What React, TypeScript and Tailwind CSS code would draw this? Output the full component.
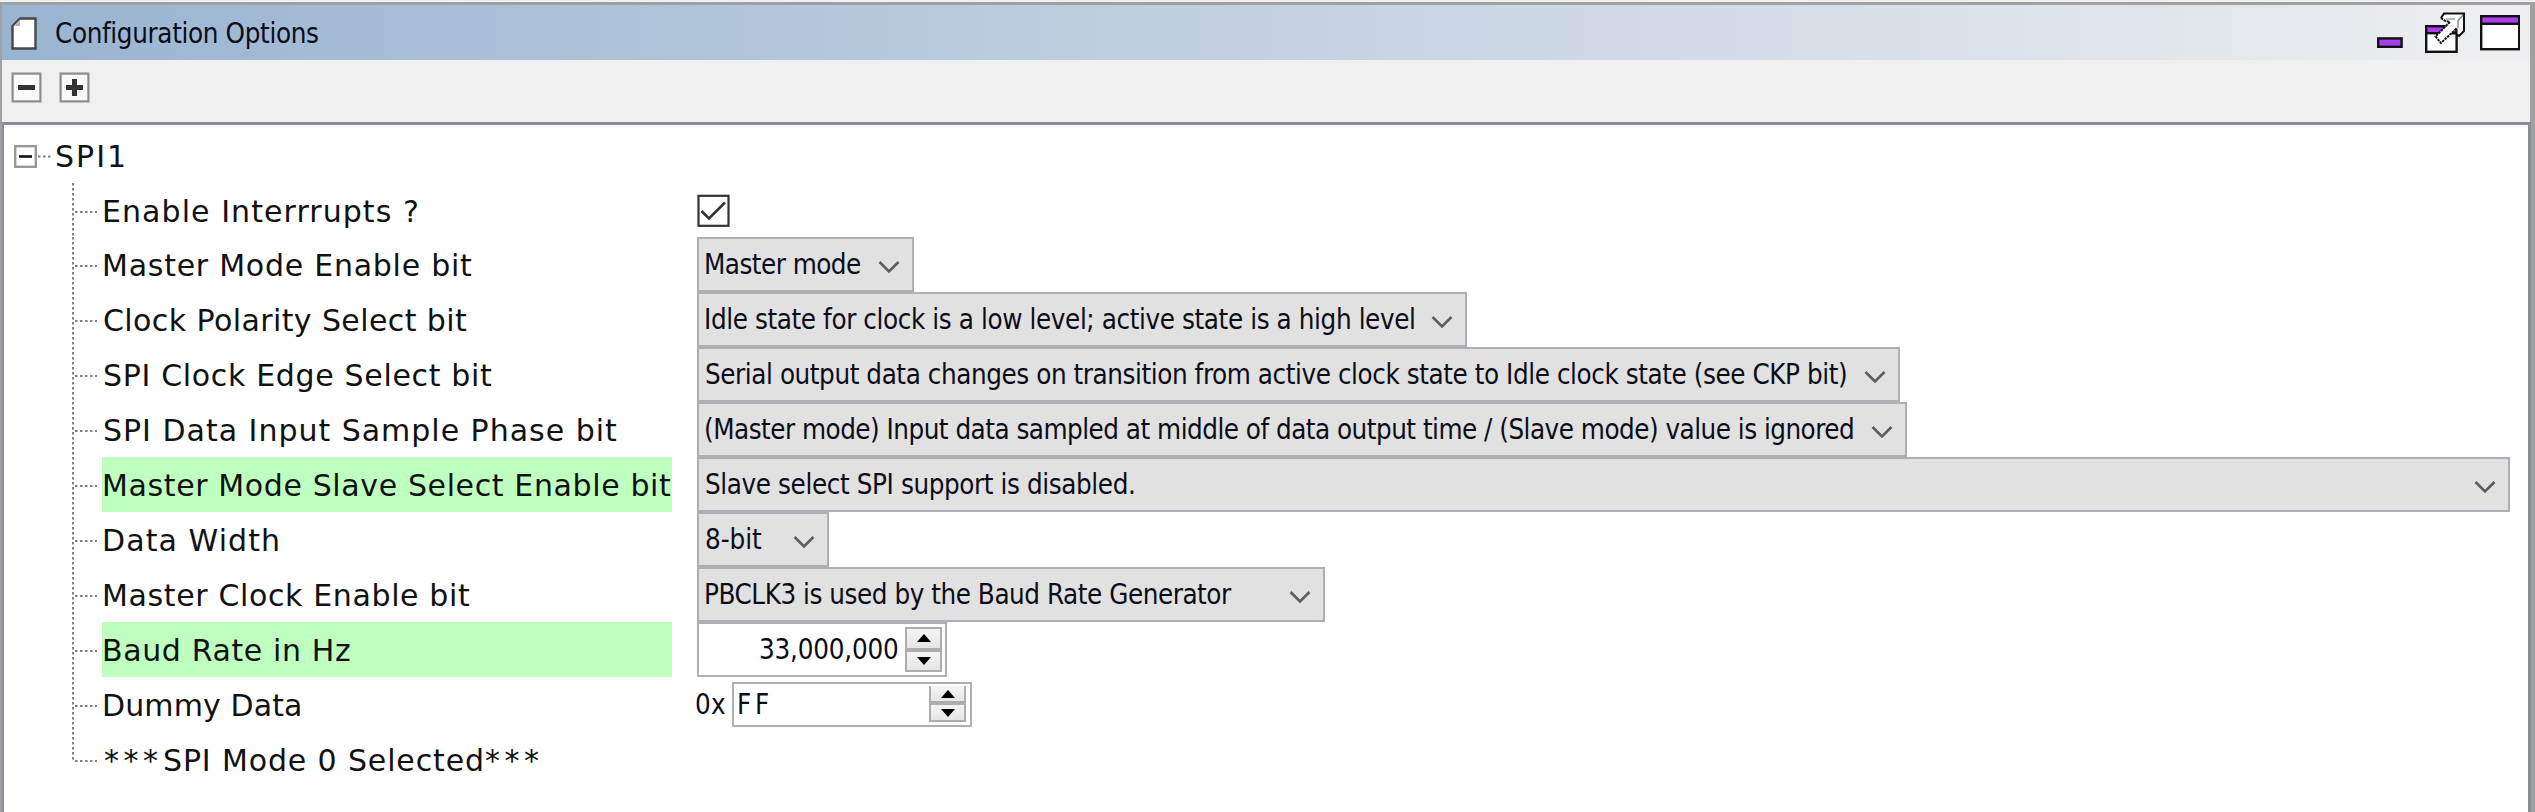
import { useLayoutEffect, useRef, type ReactNode } from "react";

const LABEL_FONT = "'DejaVu Sans', Verdana, sans-serif";
const CONTROL_FONT = "'DejaVu Sans Condensed', 'DejaVu Sans', Tahoma, sans-serif";

type FitProps = { text: string; width: number; variant?: "label" | "control" };

/** Text whose tracking is adjusted so that its glyphs span exactly `width` pixels. */
function Fit({ text, width, variant = "control" }: FitProps) {
  const ref = useRef<HTMLSpanElement>(null);
  useLayoutEffect(() => {
    const el = ref.current;
    const ctx = document.createElement("canvas").getContext("2d");
    if (!el || !ctx) return;
    ctx.font = variant === "label" ? `30px ${LABEL_FONT}` : `27.5px ${CONTROL_FONT}`;
    if (variant === "control") ctx.fontStretch = "semi-condensed";
    const m = ctx.measureText(text);
    const ink = m.actualBoundingBoxLeft + m.actualBoundingBoxRight;
    el.style.letterSpacing = `${(width - ink) / Math.max(1, text.length - 1)}px`;
    el.style.marginLeft = `${m.actualBoundingBoxLeft}px`;
  }, [text, width, variant]);
  return (
    <span
      ref={ref}
      className={
        variant === "label"
          ? "block whitespace-pre font-['DejaVu_Sans',Verdana,sans-serif] text-[30px] leading-[58px] text-[#111]"
          : "block whitespace-pre font-['DejaVu_Sans_Condensed','DejaVu_Sans',Tahoma,sans-serif] text-[27.5px] text-[#0c0c18] [font-stretch:semi-condensed]"
      }
    >
      {text}
    </span>
  );
}

function Chevron() {
  return (
    <svg width="22" height="14" viewBox="0 0 22 14" className="mt-[4px] shrink-0" fill="none">
      <path d="M1.5 2 L11 11.5 L20.5 2" stroke="#5c5c5c" strokeWidth="2.6" />
    </svg>
  );
}

function Combo({ text, ink, box }: { text: string; ink: number; box: string }) {
  return (
    <div className={`flex h-[55px] items-center justify-between border-2 border-[#adafb5] bg-[#e1e1e1] pl-[7px] pr-[12px] ${box}`}>
      <Fit text={text} width={ink} />
      <Chevron />
    </div>
  );
}

function Arrow({ up }: { up?: boolean }) {
  return (
    <svg width="14" height="8" viewBox="0 0 14 8">
      <path d={up ? "M7 0 L14 8 H0 Z" : "M0 0 H14 L7 8 Z"} fill="#000" />
    </svg>
  );
}

const buttonFill = "flex flex-1 items-center justify-center bg-linear-to-b from-[#f4f4f4] to-[#e6e6e6]";

type RowProps = { label: ReactNode; ink?: number; highlight?: boolean; last?: boolean; children?: ReactNode };

function Row({ label, ink = 0, highlight, last, children }: RowProps) {
  return (
    <div className="flex h-[54.95px] items-start">
      <svg width="98" height="55" viewBox="0 0 98 55" className="shrink-0" fill="none" stroke="#808080" strokeWidth="2">
        <path d={last ? "M69 0 V28" : "M69 0 V55"} strokeDasharray="2.5 2.5" />
        <path d="M71 29 H93" strokeDasharray="2.5 2.5" />
      </svg>
      <div className={highlight ? "h-[55px] w-[570px] bg-[#bfffbf] pl-[2px]" : "h-[55px] w-[570px] pl-[2px]"}>
        {typeof label === "string" ? <Fit text={label} width={ink} variant="label" /> : label}
      </div>
      <div className="ml-[25px] flex h-[55px] items-start">{children}</div>
    </div>
  );
}

export default function App() {
  return (
    <div className="flex h-[812px] w-[2535px] flex-col overflow-hidden bg-[#f0f0f0] pt-[2px]">
      <div className="flex min-h-0 flex-1 flex-col border-t-[3px] border-r-[5px] border-l-2 border-[#a0a0a0]">
        <header className="flex h-[55px] shrink-0 items-center bg-linear-to-r from-[#99b4d1] to-[#eeeff0] pl-[9px]">
          <svg width="26" height="34" viewBox="0 0 26 34" className="mt-[3px]">
            <path d="M9 1.5 H24.5 V31.5 H1.5 V9 Z" fill="#fff" stroke="#484848" strokeWidth="2.4" />
            <path d="M9 2.5 V9 H2.5 Z" fill="#b5b5b5" />
          </svg>
          <div className="ml-[19px] flex h-full flex-1 items-center pt-[2px]">
            <Fit text="Configuration Options" width={262} />
          </div>
          <svg width="144" height="55" viewBox="0 0 144 55" className="mr-[10px]" stroke="#111" strokeWidth="2.4">
            <rect x="2.2" y="33.4" width="23.4" height="8.4" fill="#a93cec" />
            <rect x="50.2" y="21.2" width="30.4" height="25.6" fill="#fff" />
            <rect x="50.2" y="21.2" width="30.4" height="7" fill="#a93cec" />
            <path d="M68 8.5 H88 V26 L83 31 L80.5 29 V23.5 L65 38 L59.5 31.5 L74 17 L69.5 16 L65 13 Z" fill="#fff" stroke="none" />
            <path d="M65 13 L68 8.5 H88 V26 L83 31 L80.5 29 V23.5" fill="none" strokeWidth="2" />
            <path d="M80.5 23.5 L65 38 L59.5 31.5 L74 17 L69.5 16 L65 13" fill="none" strokeWidth="1.9" strokeDasharray="2.6 0.8" />
            <path d="M70 14 H79 M87 10 L82 15.5 V23" fill="none" stroke="#777" strokeWidth="1.2" />
            <rect x="105.2" y="11.2" width="38" height="33" fill="#fff" />
            <rect x="105.2" y="11.2" width="38" height="7.6" fill="#a93cec" />
          </svg>
        </header>

        <div className="flex h-[62px] shrink-0 gap-[17px] pt-[12px] pl-[9px]">
          {[false, true].map((plus) => (
            <svg key={String(plus)} width="31" height="31" viewBox="0 0 31 31">
              <rect x="1.6" y="1.6" width="27.8" height="27.8" fill="#fafafa" stroke="#8c8c8c" strokeWidth="2.2" />
              <path d={plus ? "M7 15.5 H24 M15.5 7 V24" : "M7 15.5 H24"} stroke="#333" strokeWidth="5" />
            </svg>
          ))}
        </div>

        <main className="-mr-px flex-1 border-t-[3px] border-r-[3px] border-l-2 border-[#888c96] bg-white pt-[3px]">
          <div className="flex h-[54.5px] items-start">
            <svg width="49" height="55" viewBox="0 0 49 55" className="shrink-0">
              <rect x="11.2" y="18.2" width="20.6" height="20.6" fill="#fff" stroke="#999" strokeWidth="2.4" />
              <path d="M15 28.5 H28" stroke="#111" strokeWidth="2.6" />
              <path d="M34 28.5 H47" stroke="#808080" strokeWidth="2" strokeDasharray="2.5 2.5" />
            </svg>
            <div className="pl-[3px]">
              <Fit text="SPI1" width={68} variant="label" />
            </div>
          </div>
          <Row label="Enable Interrrupts ?" ink={313}>
            <svg width="34" height="34" viewBox="0 0 34 34" className="mt-[11px]" fill="none">
              <rect x="1.5" y="1.8" width="30" height="30" fill="#fff" stroke="#333" strokeWidth="2.2" />
              <path d="M4.5 17 L12 24.5 L28 8.5" stroke="#333" strokeWidth="2.6" />
            </svg>
          </Row>
          <Row label="Master Mode Enable bit" ink={368}>
            <Combo text="Master mode" ink={154} box="w-[217px]" />
          </Row>
          <Row label="Clock Polarity Select bit" ink={363}>
            <Combo text="Idle state for clock is a low level; active state is a high level" ink={708} box="w-[770px]" />
          </Row>
          <Row label="SPI Clock Edge Select bit" ink={388}>
            <Combo text="Serial output data changes on transition from active clock state to Idle clock state (see CKP bit)" ink={1140} box="w-[1203px]" />
          </Row>
          <Row label="SPI Data Input Sample Phase bit" ink={513}>
            <Combo text="(Master mode) Input data sampled at middle of data output time / (Slave mode) value is ignored" ink={1147} box="w-[1210px]" />
          </Row>
          <Row label="Master Mode Slave Select Enable bit" ink={567} highlight>
            <Combo text="Slave select SPI support is disabled." ink={428} box="w-[1813px]" />
          </Row>
          <Row label="Data Width" ink={174}>
            <Combo text="8-bit" ink={56} box="w-[132px]" />
          </Row>
          <Row label="Master Clock Enable bit" ink={366}>
            <Combo text="PBCLK3 is used by the Baud Rate Generator" ink={526} box="w-[628px]" />
          </Row>
          <Row label="Baud Rate in Hz" ink={246} highlight>
            <div className="flex h-[55px] w-[250px] items-center justify-end border-2 border-[#adafb5] bg-white pr-[3px]">
              <div className="w-[138px]">
                <Fit text="33,000,000" width={138} />
              </div>
              <div className="ml-[7px] flex h-[45px] w-[37px] flex-col border-[2.5px] border-[#adadad]">
                <div className={buttonFill}><Arrow up /></div>
                <div className="h-[4px] bg-[#adadad]" />
                <div className={buttonFill}><Arrow /></div>
              </div>
            </div>
          </Row>
          <Row label="Dummy Data" ink={196}>
            <div className="-ml-px flex h-[55px] items-center">
              <div className="w-[36px]">
                <Fit text="0x" width={29} />
              </div>
              <div className="flex h-[45px] w-[240px] items-center justify-between border-2 border-[#adafb5] bg-white pr-[4px] pl-[5px]">
                <Fit text="FF" width={29} />
                <div className="flex h-[36px] w-[37px] flex-col border-x-[2.5px] border-b-[2.5px] border-[#adadad]">
                  <div className={buttonFill}><Arrow up /></div>
                  <div className="h-[4px] bg-[#adadad]" />
                  <div className={buttonFill}><Arrow /></div>
                </div>
              </div>
            </div>
          </Row>
          <Row
            last
            label={
              <div className="flex">
                <div className="w-[60px]"><Fit text="***" width={54} variant="label" /></div>
                <div className="w-[321px]"><Fit text="SPI Mode 0 Selected" width={318} variant="label" /></div>
                <Fit text="***" width={54} variant="label" />
              </div>
            }
          />
        </main>
      </div>
    </div>
  );
}
